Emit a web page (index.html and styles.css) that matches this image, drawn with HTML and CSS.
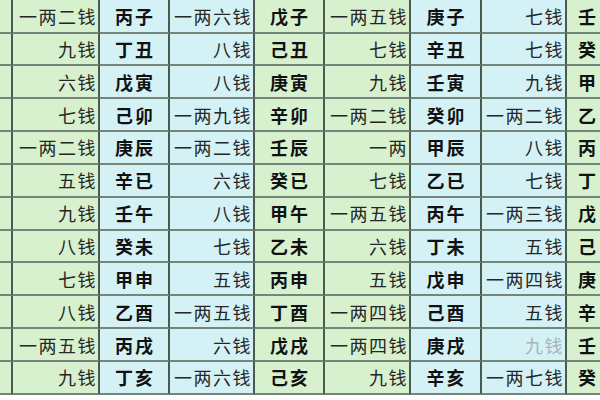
FILE: index.html
```html
<!DOCTYPE html>
<html lang="zh">
<head>
<meta charset="utf-8">
<title>称骨表</title>
<link rel="stylesheet" href="styles.css">
</head>
<body>
<div class="sheet">
  <div class="c g"></div><div class="c g w">一两二钱</div><div class="c b z">丙子</div><div class="c b w">一两六钱</div><div class="c g z">戊子</div><div class="c g w">一两五钱</div><div class="c b z">庚子</div><div class="c b w">七钱</div><div class="c g z edge">壬</div>
  <div class="c g"></div><div class="c g w">九钱</div><div class="c b z">丁丑</div><div class="c b w">八钱</div><div class="c g z">己丑</div><div class="c g w">七钱</div><div class="c b z">辛丑</div><div class="c b w">七钱</div><div class="c g z edge">癸</div>
  <div class="c g"></div><div class="c g w">六钱</div><div class="c b z">戊寅</div><div class="c b w">八钱</div><div class="c g z">庚寅</div><div class="c g w">九钱</div><div class="c b z">壬寅</div><div class="c b w">九钱</div><div class="c g z edge">甲</div>
  <div class="c g"></div><div class="c g w">七钱</div><div class="c b z">己卯</div><div class="c b w">一两九钱</div><div class="c g z">辛卯</div><div class="c g w">一两二钱</div><div class="c b z">癸卯</div><div class="c b w">一两二钱</div><div class="c g z edge">乙</div>
  <div class="c g"></div><div class="c g w">一两二钱</div><div class="c b z">庚辰</div><div class="c b w">一两二钱</div><div class="c g z">壬辰</div><div class="c g w">一两</div><div class="c b z">甲辰</div><div class="c b w">八钱</div><div class="c g z edge">丙</div>
  <div class="c g"></div><div class="c g w">五钱</div><div class="c b z">辛已</div><div class="c b w">六钱</div><div class="c g z">癸已</div><div class="c g w">七钱</div><div class="c b z">乙已</div><div class="c b w">七钱</div><div class="c g z edge">丁</div>
  <div class="c g"></div><div class="c g w">九钱</div><div class="c b z">壬午</div><div class="c b w">八钱</div><div class="c g z">甲午</div><div class="c g w">一两五钱</div><div class="c b z">丙午</div><div class="c b w">一两三钱</div><div class="c g z edge">戊</div>
  <div class="c g"></div><div class="c g w">八钱</div><div class="c b z">癸未</div><div class="c b w">七钱</div><div class="c g z">乙未</div><div class="c g w">六钱</div><div class="c b z">丁未</div><div class="c b w">五钱</div><div class="c g z edge">己</div>
  <div class="c g"></div><div class="c g w">七钱</div><div class="c b z">甲申</div><div class="c b w">五钱</div><div class="c g z">丙申</div><div class="c g w">五钱</div><div class="c b z">戊申</div><div class="c b w">一两四钱</div><div class="c g z edge">庚</div>
  <div class="c g"></div><div class="c g w">八钱</div><div class="c b z">乙酉</div><div class="c b w">一两五钱</div><div class="c g z">丁酉</div><div class="c g w">一两四钱</div><div class="c b z">己酉</div><div class="c b w">五钱</div><div class="c g z edge">辛</div>
  <div class="c g"></div><div class="c g w">一两五钱</div><div class="c b z">丙戌</div><div class="c b w">六钱</div><div class="c g z">戊戌</div><div class="c g w">一两四钱</div><div class="c b z">庚戌</div><div class="c b w faded">九钱</div><div class="c g z edge">壬</div>
  <div class="c g"></div><div class="c g w">九钱</div><div class="c b z">丁亥</div><div class="c b w">一两六钱</div><div class="c g z">己亥</div><div class="c g w">九钱</div><div class="c b z">辛亥</div><div class="c b w">一两七钱</div><div class="c g z edge">癸</div>
</div>
</body>
</html>
```

FILE: styles.css
```css
html, body {
  margin: 0;
  padding: 0;
  background: #ffffff;
  overflow: hidden;
  width: 600px;
  height: 400px;
}

.sheet {
  display: grid;
  grid-template-columns: 13px 87px 70px 85px 70px 86px 71px 85px 33px;
  grid-template-rows: 33.5px repeat(11, 32.85px);
  width: 600px;
  font-family: "Noto Sans CJK SC", "Noto Sans", sans-serif;
  font-size: 18px;
  line-height: 1;
}

.c {
  box-sizing: border-box;
  border-right: 2px solid #4a5a4e;
  border-bottom: 2px solid #76857a;
  display: flex;
  align-items: center;
  overflow: hidden;
  white-space: nowrap;
}

.g { background: #d7f1cf; }
.b { background: #d4f2f6; }

.w {
  justify-content: flex-end;
  padding-right: 1px;
  color: #262626;
  letter-spacing: 1.5px;
}

.z {
  justify-content: center;
  font-weight: 700;
  color: #111111;
  letter-spacing: 2px;
  padding-left: 2px;
}

.z.edge {
  justify-content: flex-start;
  padding-left: 11px;
  border-right: none;
  letter-spacing: 0;
}

.faded { color: #a9b4b6; }
```
